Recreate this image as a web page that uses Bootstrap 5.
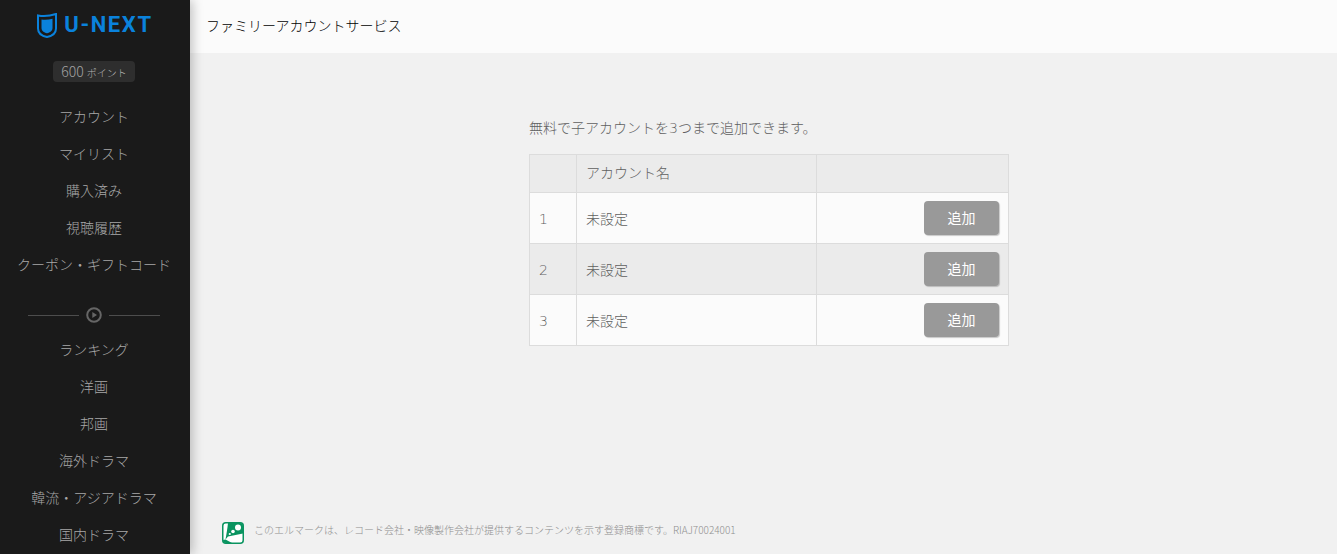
<!DOCTYPE html>
<html lang="ja">
<head>
<meta charset="utf-8">
<title>ファミリーアカウントサービス</title>
<link href="https://cdn.jsdelivr.net/npm/bootstrap@5.3.0/dist/css/bootstrap.min.css" rel="stylesheet">
<style>
html,body{height:554px;overflow:hidden;}
body{background:#f1f1f1;color:#5f5f5f;font-family:"Noto Sans CJK JP","Noto Sans",sans-serif;font-weight:300;font-size:14px;}
.shell{height:554px;}
.side{width:190px;flex:none;background:#1a1a1a;height:554px;overflow:hidden;box-shadow:3px 0 10px rgba(0,0,0,.22);z-index:2;padding-right:2px;}
.logo-row{height:49px;padding-top:1px;gap:7px;}
.logo-word{font-family:"Liberation Sans Narrow","Roboto","Liberation Sans",sans-serif;font-weight:700;font-size:22px;letter-spacing:1.6px;color:#0a82dc;line-height:1;margin-right:-2px;}
.points{height:21px;width:82px;margin:12px auto 0;background:#2e2e2e;border-radius:4px;color:#a3a3a3;font-size:14px;line-height:21px;}
.points small{font-size:10px;color:#b3b3b3;}
.menu-list{margin:0;padding:0;list-style:none;}
.menu-list li{height:37px;line-height:37px;text-align:center;color:#a8a8a8;font-size:14px;white-space:nowrap;}
.menu-top{margin-top:16px;}
.rule-row{height:32px;margin-top:16px;padding:0 28px;gap:7px;}
.rule-line{height:1px;background:#4d4d4d;flex:1;}
.head-bar{height:53px;background:#fbfbfb;padding-left:16px;color:#000;font-size:14px;font-weight:300;line-height:51px;}
.main-pane{min-width:0;}
.content-box{width:480px;margin:65px 0 0 339px;font-family:"DejaVu Sans","Noto Sans CJK JP",sans-serif;}
.lead-text{font-size:14px;line-height:20px;margin:0 0 16px;}
.acct-table{width:480px;table-layout:fixed;margin:0;border-color:#dcdcdc;--bs-table-bg:transparent;--bs-table-color:#5f5f5f;}
.acct-table th,.acct-table td{border:1px solid #dcdcdc;padding:0 8px 0 9px;vertical-align:middle;font-weight:300;font-size:14px;background:#fbfbfb;color:#5f5f5f;}
.acct-table tbody td{padding-top:2px;}
.acct-table thead th{height:38px;background:#ebebeb;}
.acct-table tbody td{height:51px;}
.acct-table tbody tr:nth-child(2) td{background:#ebebeb;}
.add-btn{width:75px;height:34px;padding:0;background:#999;border:0;border-radius:4px;color:#fff;font-size:14px;font-weight:400;box-shadow:1px 1px 1px rgba(0,0,0,.2);}
.add-btn:hover{background:#999;color:#fff;}
.add-cell{text-align:right;}
.acct-table tbody td.add-cell{padding:0 9px 0 0;}
.foot-note{position:absolute;left:222px;top:522px;gap:10px;color:#8f8f8f;font-size:10px;line-height:16px;}
</style>
</head>
<body>
<div class="d-flex shell">
  <nav class="side">
    <div class="logo-row d-flex align-items-center justify-content-center">
      <svg width="20" height="25" viewBox="0 0 20 25" aria-hidden="true"><path d="M1 2.5C6 3.500 13 3 19 1V15.500c0 4.500-4 7.500-9 8.500C5 23 1 20 1 15.500Z" fill="none" stroke="#0a82dc" stroke-width="2"/><path d="M4.500 6.500C8 7 12 6.700 15.500 5.800V15c0 2.800-2.500 4.600-5.500 5.300-3-.7-5.500-2.500-5.500-5.300Z" fill="#0a82dc"/></svg>
      <span class="logo-word">U-NEXT</span>
    </div>
    <div class="points text-center">600 <small>ポイント</small></div>
    <ul class="menu-list menu-top">
      <li>アカウント</li>
      <li>マイリスト</li>
      <li>購入済み</li>
      <li>視聴履歴</li>
      <li>クーポン・ギフトコード</li>
    </ul>
    <div class="rule-row d-flex align-items-center">
      <span class="rule-line"></span>
      <svg width="16" height="16" viewBox="0 0 16 16" aria-hidden="true"><circle cx="8" cy="8" r="6.800" fill="none" stroke="#666" stroke-width="2"/><path d="M6.300 5.100 11 8l-4.700 2.900Z" fill="#666"/></svg>
      <span class="rule-line"></span>
    </div>
    <ul class="menu-list">
      <li>ランキング</li>
      <li>洋画</li>
      <li>邦画</li>
      <li>海外ドラマ</li>
      <li>韓流・アジアドラマ</li>
      <li>国内ドラマ</li>
    </ul>
  </nav>
  <div class="main-pane flex-grow-1">
    <header class="head-bar">ファミリーアカウントサービス</header>
    <div class="content-box">
      <p class="lead-text">無料で子アカウントを3つまで追加できます。</p>
      <table class="table acct-table">
        <colgroup><col style="width:47px"><col style="width:240px"><col></colgroup>
        <thead><tr><th></th><th>アカウント名</th><th></th></tr></thead>
        <tbody>
          <tr><td>1</td><td>未設定</td><td class="add-cell"><button class="btn add-btn" type="button">追加</button></td></tr>
          <tr><td>2</td><td>未設定</td><td class="add-cell"><button class="btn add-btn" type="button">追加</button></td></tr>
          <tr><td>3</td><td>未設定</td><td class="add-cell"><button class="btn add-btn" type="button">追加</button></td></tr>
        </tbody>
      </table>
    </div>
  </div>
</div>
<div class="foot-note d-flex align-items-start">
  <svg width="22" height="22" viewBox="0 0 22 22" aria-hidden="true"><rect x=".75" y=".75" width="20.500" height="20.500" rx="3" fill="#fff" stroke="#0a9460" stroke-width="1.500"/><path d="M6 1h12a3 3 0 0 1 3 3v7.500L6 14.500 3.500 17.500C4.500 12 5.500 6 6 1Z" fill="#0a9460"/><path d="M1 18 3.500 17.500 10 21H4a3 3 0 0 1-3-3Z" fill="#0a9460"/><circle cx="16" cy="5.500" r="3" fill="#fff"/><circle cx="11" cy="9.500" r="1.800" fill="#fff"/><circle cx="7.800" cy="12" r="1.100" fill="#fff"/></svg>
  <span>このエルマークは、レコード会社・映像製作会社が提供するコンテンツを示す登録商標です。RIAJ70024001</span>
</div>
</body>
</html>
